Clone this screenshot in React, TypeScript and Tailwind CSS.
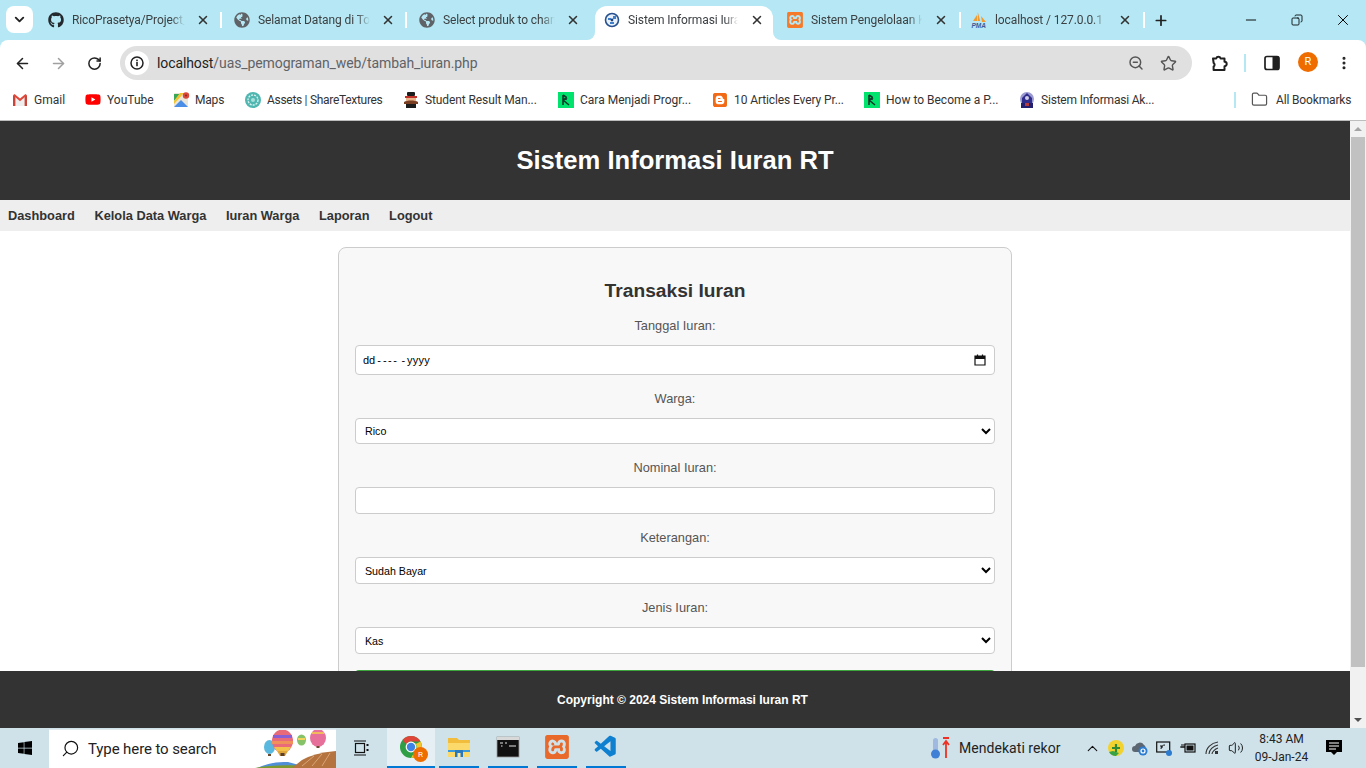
import React from "react";
import {
  ArrowLeft,
  ArrowRight,
  RotateCw,
  Star,
  MoreVertical,
  X,
  Plus,
  Minus,
  ChevronDown,
  ChevronUp,
  Search,
  ZoomOut,
  Folder,
  Copy,
  Volume2,
} from "lucide-react";
import { FaGithub, FaGlobeAmericas, FaYoutube, FaWindows, FaBlogger } from "react-icons/fa";
import { SiXampp } from "react-icons/si";
import { VscVscode } from "react-icons/vsc";

const sans = "font-['Roboto','Liberation_Sans',sans-serif]";

const SchoolIcon = () => (
  <svg width="16" height="16" viewBox="0 0 16 16">
    <circle cx="8" cy="8" r="6.5" fill="#e8f0fa" stroke="#27508f" strokeWidth="1.6" />
    <path d="M4 6h3v2H4ZM9 4h3v3H9ZM6 10h4v2H6Z" fill="#3f7ecb" />
    <circle cx="8" cy="8" r="1.4" fill="#1d3f76" />
  </svg>
);

const PmaIcon = () => (
  <svg width="16" height="16" viewBox="0 0 16 16">
    <path d="M2 9 6 3v6ZM6.8 9V0l2.4 9ZM10 4l5 6h-4Z" fill="#f29a2e" />
    <text x="0.5" y="15.5" fontSize="6.5" fontWeight="700" fontStyle="italic" fontFamily="Liberation Sans, sans-serif" fill="#3d5a98">
      PMA
    </text>
  </svg>
);

const DcIcon = () => (
  <svg width="16" height="16" viewBox="0 0 16 16">
    <rect width="16" height="16" fill="#00e36c" />
    <path d="M5 3v10M5 3l3 2v3M5 8l4-2.5M5 8l6 5" fill="none" stroke="#12372a" strokeWidth="1.6" />
  </svg>
);

const GmailIcon = () => (
  <svg width="16" height="16" viewBox="0 0 16 16">
    <path d="M1 3.5 8 9l7-5.5V14H1Z" fill="#eeeeee" />
    <path d="M1 14V3.5L3.4 3v11Z" fill="#c9453a" />
    <path d="M15 14V3.5L12.6 3v11Z" fill="#c9453a" />
    <path d="M1 3.2 2.5 2 8 6.6 13.5 2 15 3.2 8 9.2Z" fill="#e0483a" />
  </svg>
);

const MapsIcon = () => (
  <svg width="16" height="16" viewBox="0 0 16 16">
    <rect y="1" width="14" height="14" rx="1" fill="#e9e5d8" />
    <path d="M0 15 7 8l7 7Z" fill="#4a8ee8" />
    <path d="M0 2h6L0 9Z" fill="#3aa757" />
    <path d="M6 1h4L0 12V9Z" fill="#f4c430" />
    <circle cx="12" cy="3.5" r="3.2" fill="#d9483b" />
    <circle cx="12" cy="3.5" r="1.1" fill="#8f2b22" />
  </svg>
);

const AssetsIcon = () => (
  <svg width="16" height="16" viewBox="0 0 16 16">
    <circle cx="8" cy="8" r="8" fill="#4fb6b0" />
    <circle cx="8" cy="8" r="5" fill="none" stroke="#d6f0ee" strokeWidth="1.4" strokeDasharray="2 1" />
    <circle cx="8" cy="8" r="2" fill="#a8dfdb" />
  </svg>
);

const StudentIcon = () => (
  <svg width="16" height="16" viewBox="0 0 16 16">
    <rect x="4" y="0" width="8" height="4" rx="1" fill="#1c1c1c" />
    <rect x="2" y="4" width="12" height="2" fill="#c23128" />
    <path d="M3 6h10v3H3Z" fill="#e9b48a" />
    <path d="M1 10c3-2 11-2 14 0v2H1Z" fill="#7a3f22" />
    <path d="M3 12h10v4H3Z" fill="#1c1c1c" />
  </svg>
);

const UnivIcon = () => (
  <svg width="16" height="16" viewBox="0 0 16 16">
    <circle cx="8" cy="7" r="7" fill="#9a9ad0" />
    <path d="M8 1 13 6v6H3V6Z" fill="#2f2c8c" />
    <circle cx="8" cy="6" r="2" fill="#cfcde8" />
    <rect x="2" y="11" width="12" height="5" fill="#24206f" />
    <rect x="6" y="11" width="4" height="3" fill="#b73a3a" />
  </svg>
);

const PuzzleIcon = () => (
  <svg width="18" height="18" viewBox="0 0 18 18">
    <path
      d="M3 4.5h3.2a2.3 2.3 0 0 1 4.4 0h3.9v3.3a2.2 2.2 0 0 1 0 4.4V16H3.6v-3.4a2.2 2.2 0 0 0 0-3.7Z"
      fill="none"
      stroke="#1f1f1f"
      strokeWidth="2"
      strokeLinejoin="round"
    />
  </svg>
);

const SidePanelIcon = () => (
  <svg width="16" height="16" viewBox="0 0 16 16">
    <rect x="1" y="1.5" width="14" height="13" rx="2" fill="none" stroke="#1f1f1f" strokeWidth="1.7" />
    <rect x="8.5" y="1.5" width="6.5" height="13" fill="#1f1f1f" />
  </svg>
);

const ChromeIcon = () => (
  <svg width="24" height="24" viewBox="0 0 24 24">
    <circle cx="12" cy="12" r="11" fill="#2f9e44" />
    <path d="M12 1a11 11 0 0 1 9.5 5.5H12A5.5 5.5 0 0 0 7 9.6L3.6 4.8A11 11 0 0 1 12 1Z" fill="#e0453a" />
    <path d="M21.5 6.5A11 11 0 0 1 12 23l4.7-8.2A5.5 5.5 0 0 0 16.8 9Z" fill="#f6c52c" />
    <circle cx="12" cy="12" r="5.4" fill="#fff" />
    <circle cx="12" cy="12" r="4.2" fill="#3f83e6" />
  </svg>
);

const ExplorerIcon = () => (
  <svg width="24" height="24" viewBox="0 0 24 24">
    <path d="M1 3h9l2 2h11v17H1Z" fill="#f2bd3c" />
    <path d="M1 8h22v14H1Z" fill="#fbd96a" />
    <rect x="1" y="15" width="22" height="2" fill="#3d9ad6" />
    <rect x="8" y="15" width="8" height="7" fill="#2a78bd" />
    <rect x="10.5" y="18" width="3" height="4" fill="#fbe7a0" />
  </svg>
);

const CmdIcon = () => (
  <svg width="24" height="24" viewBox="0 0 24 24">
    <rect x="1" y="2" width="22" height="20" fill="#111" stroke="#9a9a9a" strokeWidth="0.8" />
    <rect x="1" y="2" width="22" height="3" fill="#d8d8d8" />
    <path d="M4 8h3M9 8h2M5 11l1.5 0M13 11h7" stroke="#e6e6e6" strokeWidth="1.2" />
  </svg>
);

const Balloons = () => (
  <svg width="84" height="39" viewBox="0 0 84 39">
    <path d="M5 39Q20 32 36 33L58 39Z" fill="#4f8fd8" />
    <path d="M3 39Q22 35 60 37V39Z" fill="#7e9a2c" />
    <path d="M40 39 50 31Q62 24 84 22V39Z" fill="#b4733f" />
    <path d="M50 37 62 27M60 37 70 25M70 37 78 24" stroke="#d8a578" strokeWidth="1" />
    <ellipse cx="17.5" cy="18" rx="5.5" ry="7" fill="#5ab8de" />
    <rect x="16" y="25" width="3" height="2" fill="#6a4a30" />
    <ellipse cx="30.5" cy="12" rx="10.5" ry="11.5" fill="#e96a78" />
    <path d="M21 6h19v3H21Z" fill="#8a5fd4" />
    <path d="M20 12h21v3H20Z" fill="#f0905a" />
    <path d="M22 18h17l-3 4H25Z" fill="#f2c24b" />
    <path d="M25 22h11l-3 5h-5Z" fill="#e0a83c" />
    <rect x="28.5" y="24" width="4" height="3" fill="#5a4030" />
    <ellipse cx="49.5" cy="11" rx="4.5" ry="5.5" fill="#86c267" />
    <path d="M46 9h7v2h-7Z" fill="#f2d45c" />
    <ellipse cx="66" cy="9" rx="8" ry="9" fill="#e6709a" />
    <path d="M60 3h12v2H60Z" fill="#f2b85c" />
    <rect x="64.5" y="17" width="3" height="2" fill="#6a4a30" />
  </svg>
);

const TABS = [
  { title: "RicoPrasetya/Project_UAS", icon: <FaGithub size={16} color="#24292f" />, box: "w-[186px] pl-[13px]", close: "mx-[11px]" },
  { title: "Selamat Datang di Toko", icon: <FaGlobeAmericas size={16} color="#5f6368" />, box: "w-[185px] pl-[13px]", close: "mx-[11px]" },
  { title: "Select produk to change", icon: <FaGlobeAmericas size={16} color="#5f6368" />, box: "w-[185px] pl-[13px]", close: "mx-[11px]" },
  { title: "Sistem Informasi Iuran RT", icon: <SchoolIcon />, box: "w-[185px] pl-[13px]", close: "mx-3", active: true },
  { title: "Sistem Pengelolaan Kas", icon: <SiXampp size={16} color="#f57b2a" />, box: "w-[184px] pl-[11px]", close: "mx-3" },
  { title: "localhost / 127.0.0.1 / db", icon: <PmaIcon />, box: "w-[184px] pl-[11px]", close: "mx-3" },
];

const BOOKMARKS = [
  { title: "Gmail", icon: <GmailIcon />, box: "w-[73px]", text: "" },
  { title: "YouTube", icon: <FaYoutube size={17} color="#f00" />, box: "w-[89px]", text: "" },
  { title: "Maps", icon: <MapsIcon />, box: "w-[71px]", text: "-ml-[1px] tracking-[-0.2px]" },
  { title: "Assets | ShareTextures", icon: <AssetsIcon />, box: "w-[158px]", text: "tracking-[-0.3px]" },
  { title: "Student Result Man...", icon: <StudentIcon />, box: "w-[155px]", text: "tracking-[-0.1px]" },
  { title: "Cara Menjadi Progr...", icon: <DcIcon />, box: "w-[154px]", text: "" },
  { title: "10 Articles Every Pr...", icon: <FaBlogger size={16} color="#f26a16" />, box: "w-[152px]", text: "tracking-[-0.1px]" },
  { title: "How to Become a P...", icon: <DcIcon />, box: "w-[155px]", text: "" },
  { title: "Sistem Informasi Ak...", icon: <UnivIcon />, box: "w-[216px]", text: "tracking-[-0.2px]" },
];

const Tab = ({ tab, sepRight }: { tab: (typeof TABS)[number]; sepRight: boolean }) => (
  <div className={`relative flex h-[34px] shrink-0 items-center pb-1.5 ${tab.box}`}>
    {tab.active && (
      <>
        <div className="absolute inset-y-0 left-1 right-[3px] rounded-t-xl bg-white" />
        <div className="absolute bottom-0 left-[-4px] h-2 w-2 bg-white" />
        <div className="absolute bottom-0 left-[-4px] h-2 w-2 rounded-br-lg bg-[#b5e8f4]" />
        <div className="absolute bottom-0 right-[-5px] h-2 w-2 bg-white" />
        <div className="absolute bottom-0 right-[-5px] h-2 w-2 rounded-bl-lg bg-[#b5e8f4]" />
      </>
    )}
    <div className="relative flex h-4 w-4 shrink-0 items-center justify-center">{tab.icon}</div>
    <div className="relative ml-2 min-w-0 flex-1 overflow-hidden whitespace-nowrap text-xs tracking-[-0.1px] text-[#3c4043] [mask-image:linear-gradient(to_right,black_88%,transparent)]">
      {tab.title}
    </div>
    <X size={14} strokeWidth={2.6} className={`relative shrink-0 text-[#333] ${tab.close}`} />
    {sepRight && <div className="absolute right-[-1px] top-[6px] h-4 w-0.5 bg-white" />}
  </div>
);

const Field = ({ label, children }: { label: string; children: React.ReactNode }) => (
  <div className="mt-4 flex flex-col">
    <label className="mb-[11px] block text-center text-[12.8px] leading-4 text-[#555]">{label}</label>
    {children}
  </div>
);

const Select = ({ value, cls }: { value: string; cls: string }) => (
  <select
    defaultValue={value}
    className={`w-full rounded border border-[#ccc] bg-white pl-[5px] text-[10.67px] text-black ${cls}`}
  >
    <option>{value}</option>
  </select>
);

const TrayIcon = ({ children }: { children: React.ReactNode }) => (
  <div className="flex h-full w-6 items-center justify-center">{children}</div>
);

const TaskApp = ({ children, active }: { children: React.ReactNode; active?: boolean }) => (
  <div
    className={`flex h-10 items-center justify-center border-b-2 border-[#0078d4] ${
      active ? "mr-1 w-[48px] bg-[#e6f0f4]" : "mr-[9px] w-10"
    }`}
  >
    {children}
  </div>
);

export default function App() {
  return (
    <div className={`flex h-screen w-[1366px] flex-col overflow-hidden bg-[#b5e8f4] ${sans}`}>
      {/* tab strip */}
      <div className="flex h-10 shrink-0 items-end">
        <div className="mb-[7px] ml-1.5 mr-[2px] flex h-[27px] w-[27px] shrink-0 items-center justify-center rounded-lg bg-white">
          <ChevronDown size={15} strokeWidth={3} className="text-[#222]" />
        </div>
        {TABS.map((t, i) => (
          <Tab key={t.title} tab={t} sepRight={i === 0 || i === 1 || i === 4 || i === 5} />
        ))}
        <div className="mb-[12px] ml-[9px] flex h-4 w-4 items-center justify-center">
          <Plus size={17} strokeWidth={2.6} className="text-[#222]" />
        </div>
        <div className="mb-[11px] ml-auto flex items-center text-black">
          <div className="flex w-[46px] justify-center"><Minus size={16} strokeWidth={1.4} /></div>
          <div className="flex w-[46px] justify-center"><Copy size={12} strokeWidth={1.7} className="-scale-x-100" /></div>
          <div className="flex w-[46px] justify-center"><X size={18} strokeWidth={1.3} /></div>
        </div>
      </div>

      {/* address bar */}
      <div className="flex h-10 shrink-0 items-start rounded-t-lg bg-white pl-1 pt-1.5">
        <div className="flex h-[34px] w-9 items-center justify-center"><ArrowLeft size={17} strokeWidth={2.2} className="text-[#222]" /></div>
        <div className="flex h-[34px] w-9 items-center justify-center"><ArrowRight size={17} strokeWidth={2.2} className="text-[#a0a0a0]" /></div>
        <div className="flex h-[34px] w-9 items-center justify-center"><RotateCw size={15} strokeWidth={2.4} className="text-[#222]" /></div>
        <div className="ml-2 flex h-[34px] w-[1072px] items-center rounded-full bg-[#e0e0e0] pl-[5px] pr-[15px]">
          <div className="flex h-6 w-6 items-center justify-center rounded-full bg-white">
            <svg width="14" height="14" viewBox="0 0 14 14">
              <circle cx="7" cy="7" r="6" fill="none" stroke="#222" strokeWidth="1.5" />
              <rect x="6.2" y="6" width="1.6" height="4.2" fill="#222" />
              <rect x="6.2" y="3.6" width="1.6" height="1.6" fill="#222" />
            </svg>
          </div>
          <div className="ml-2 text-sm tracking-[-0.1px] text-[#5f6368]">
            <span className="text-[#222]">localhost</span>/uas_pemograman_web/tambah_iuran.php
          </div>
          <ZoomOut size={16} strokeWidth={2.2} className="ml-auto text-[#555]" />
          <Star size={17} strokeWidth={2} className="ml-4 text-[#555]" />
        </div>
        <div className="ml-4 flex h-[34px] w-[22px] items-center justify-center"><PuzzleIcon /></div>
        <div className="ml-[14px] mt-2 h-[18px] w-0.5 bg-[#b5e8f4]" />
        <div className="ml-[18px] flex h-[34px] w-4 items-center justify-center"><SidePanelIcon /></div>
        <div className="ml-[18px] mt-[6px] flex h-5 w-5 items-center justify-center rounded-full bg-[#ee6c00] text-[11px] text-white">R</div>
        <div className="ml-[18px] flex h-[34px] w-4 items-center justify-center"><MoreVertical size={16} strokeWidth={2.6} className="text-[#222]" /></div>
      </div>

      {/* bookmarks */}
      <div className="flex h-[41px] shrink-0 items-center border-b border-[#bdbdbd] bg-white pb-[1px] pl-3 text-xs text-[#333]">
        {BOOKMARKS.map((b) => (
          <div key={b.title} className={`flex shrink-0 items-center gap-1.5 whitespace-nowrap ${b.box}`}>
            <div className="flex h-4 w-4 shrink-0 items-center justify-center">{b.icon}</div>
            <span className={b.text}>{b.title}</span>
          </div>
        ))}
        <div className="-ml-[1px] h-4 w-0.5 bg-[#b5e8f4]" />
        <Folder size={17} strokeWidth={1.7} className="ml-[15px] text-[#555]" />
        <div className="ml-2 whitespace-nowrap tracking-[-0.15px]">All Bookmarks</div>
      </div>

      {/* page */}
      <div className="flex min-h-0 flex-1 bg-white">
        <div className="flex min-w-0 flex-1 flex-col font-['Liberation_Sans',Arial,sans-serif]">
          <header className="flex h-[79px] shrink-0 items-center justify-center bg-[#333] text-white">
            <h1 className="text-[25.6px] font-bold">Sistem Informasi Iuran RT</h1>
          </header>
          <nav className="flex h-[31px] shrink-0 items-center gap-[19.6px] bg-[#eee] px-2 text-[12.8px] font-bold text-[#333]">
            <a>Dashboard</a>
            <a>Kelola Data Warga</a>
            <a>Iuran Warga</a>
            <a>Laporan</a>
            <a>Logout</a>
          </nav>
          <main className="min-h-0 flex-1 overflow-hidden pt-4">
            <div className="mx-auto w-[674px] rounded-lg border border-[#ccc] bg-[#f8f8f8] px-4 pb-6 pt-[31px]">
              <h2 className="text-center text-[19.2px] font-bold leading-[23px] text-[#333]">Transaksi Iuran</h2>
              <Field label="Tanggal Iuran:">
                <div className="flex h-[30px] items-center rounded border border-[#ccc] bg-white pl-[7px] pr-2 text-[11px] text-black">
                  <span>dd</span>
                  <span className="ml-[2px]">-</span>
                  <span className="ml-[2px] tracking-[1.5px]">---</span>
                  <span className="ml-[3px]">-</span>
                  <span className="ml-[2px] tracking-[0.25px]">yyyy</span>
                  <svg width="12" height="12" viewBox="0 0 12 12" className="ml-auto">
                    <path d="M1 2h10v9H1Z" fill="none" stroke="#111" strokeWidth="1.2" />
                    <rect x="1" y="2" width="10" height="3" fill="#111" />
                    <path d="M3.5 0.5v2M8.5 0.5v2" stroke="#111" strokeWidth="1.2" />
                  </svg>
                </div>
              </Field>
              <Field label="Warga:">
                <Select value="Rico" cls="h-[26px]" />
              </Field>
              <Field label="Nominal Iuran:">
                <input type="text" className="h-[27px] w-full rounded border border-[#ccc] bg-white px-2 text-xs" />
              </Field>
              <Field label="Keterangan:">
                <Select value="Sudah Bayar" cls="h-[27px]" />
              </Field>
              <Field label="Jenis Iuran:">
                <Select value="Kas" cls="h-[27px]" />
              </Field>
              <button className="mt-4 h-9 w-full rounded bg-[#3ca53c] text-[12.8px] font-bold text-white">Simpan</button>
            </div>
          </main>
          <footer className="flex h-[57px] shrink-0 items-center justify-center bg-[#333] pl-[15px] text-xs font-bold text-white">
            Copyright © 2024 Sistem Informasi Iuran RT
          </footer>
        </div>

        {/* scrollbar */}
        <div className="flex w-4 shrink-0 flex-col bg-[#f1f1f1]">
          <div className="flex h-4 shrink-0 items-center justify-center">
            <div className="h-0 w-0 border-x-4 border-b-4 border-x-transparent border-b-[#a3a3a3]" />
          </div>
          <div className="mx-[1px] h-[530px] bg-[#c1c1c1]" />
          <div className="mt-auto flex h-4 shrink-0 items-center justify-center">
            <div className="h-0 w-0 border-x-4 border-t-4 border-x-transparent border-t-[#505050]" />
          </div>
        </div>
      </div>

      {/* taskbar */}
      <div className="flex h-10 shrink-0 items-center bg-[#cfe2ea]">
        <div className="flex h-10 w-[49px] items-center justify-center"><FaWindows size={16} color="#000" /></div>
        <div className="relative flex h-[39px] w-[287px] items-center overflow-hidden border-t border-[#dfe9ee] bg-white">
          <Search size={19} strokeWidth={1.5} className="ml-3 -scale-x-100 text-[#111]" />
          <span className="ml-2 pt-[1px] text-[15px] tracking-[-0.1px] text-[#222]">Type here to search</span>
          <div className="absolute bottom-0 right-0"><Balloons /></div>
        </div>
        <div className="ml-[17px] flex w-4 items-center justify-center">
          <svg width="16" height="16" viewBox="0 0 16 16">
            <rect x="2.5" y="3.5" width="9" height="9" fill="none" stroke="#111" strokeWidth="1.2" />
            <path d="M1 1h12M1 15h12" stroke="#111" strokeWidth="1.2" />
            <rect x="13.5" y="4" width="2" height="2" fill="#111" />
            <rect x="13.5" y="9" width="2" height="2" fill="#111" />
          </svg>
        </div>
        <div className="ml-[18px] flex items-center">
          <TaskApp active>
            <div className="relative">
              <ChromeIcon />
              <div className="absolute -bottom-[3px] -right-[5px] flex h-[15px] w-[15px] items-center justify-center rounded-full bg-[#ee6c00] text-[8px] text-white">R</div>
            </div>
          </TaskApp>
          <TaskApp><ExplorerIcon /></TaskApp>
          <TaskApp><CmdIcon /></TaskApp>
          <TaskApp><SiXampp size={24} color="#e8692a" /></TaskApp>
          <TaskApp><VscVscode size={26} color="#0f7fd0" /></TaskApp>
        </div>
        <div className="ml-[295px] flex h-full items-center">
          <svg width="20" height="24" viewBox="0 0 20 24">
            <rect x="3" y="2" width="5" height="15" rx="2.5" fill="#9fb9e0" />
            <circle cx="5.5" cy="18" r="4.5" fill="#3f7fd6" />
            <path d="M13 2h6M16 22V6M13 9l3-4 3 4" stroke="#ee3124" strokeWidth="1.8" fill="none" />
          </svg>
          <span className="ml-[9px] text-sm tracking-[0.05px] text-[#222]">Mendekati rekor</span>
        </div>
        <div className="ml-5 flex h-full items-center">
          <TrayIcon><ChevronUp size={17} strokeWidth={1.6} className="text-[#111]" /></TrayIcon>
          <TrayIcon>
            <svg width="16" height="16" viewBox="0 0 16 16">
              <circle cx="8" cy="8" r="8" fill="#f2d22e" />
              <path d="M8 16A8 8 0 0 1 1 12l4-1 6 2Z" fill="#37a344" />
              <path d="M8 4v8M4 8h8" stroke="#2f8a38" strokeWidth="2.2" />
            </svg>
          </TrayIcon>
          <TrayIcon>
            <svg width="18" height="16" viewBox="0 0 18 16">
              <path d="M4 12a3 3 0 0 1 0-6 5 5 0 0 1 9-1 3 3 0 0 1 1 4H8v3Z" fill="#5c6670" />
              <circle cx="12" cy="11" r="4.5" fill="#2b7bd0" />
              <circle cx="12" cy="11" r="2" fill="none" stroke="#fff" strokeWidth="1.2" />
            </svg>
          </TrayIcon>
          <TrayIcon>
            <svg width="16" height="16" viewBox="0 0 16 16">
              <rect x="0.7" y="2" width="13" height="10" fill="none" stroke="#111" strokeWidth="1.2" />
              <path d="M5 9c0-3 2-4 4-4M5 5v2h2" fill="none" stroke="#111" strokeWidth="1" />
              <circle cx="13" cy="13" r="3" fill="#2b7bd0" />
            </svg>
          </TrayIcon>
          <TrayIcon>
            <svg width="16" height="14" viewBox="0 0 16 14">
              <rect x="5" y="3" width="10" height="8" fill="none" stroke="#111" strokeWidth="1.2" />
              <rect x="6.5" y="4.5" width="7" height="5" fill="#111" />
              <path d="M0 6h5M2 3v4M4 3v4" stroke="#111" strokeWidth="1" />
            </svg>
          </TrayIcon>
          <TrayIcon>
            <svg width="15" height="14" viewBox="0 0 15 14">
              <path d="M1 13C1 7 6 2 13 1M4 13C4 9 8 5 13 4M7 13c0-2 3-5 6-6" fill="none" stroke="#333" strokeWidth="1.1" />
              <path d="M10 10h3v3h-3Z" fill="#333" />
            </svg>
          </TrayIcon>
          <TrayIcon><Volume2 size={16} strokeWidth={1.4} className="text-[#111]" /></TrayIcon>
        </div>
        <div className="ml-[3px] flex w-[60px] flex-col items-center text-xs leading-[18px] text-[#222]">
          <span>8:43 AM</span>
          <span>09-Jan-24</span>
        </div>
        <div className="ml-[15px] flex w-4 items-center justify-center">
          <svg width="16" height="17" viewBox="0 0 16 17">
            <path d="M0 0h16v12h-5l-3 3-3-3H0Z" fill="#000" />
            <path d="M3 3h10M3 6h10M3 9h7" stroke="#fff" strokeWidth="1" />
          </svg>
        </div>
      </div>
    </div>
  );
}
